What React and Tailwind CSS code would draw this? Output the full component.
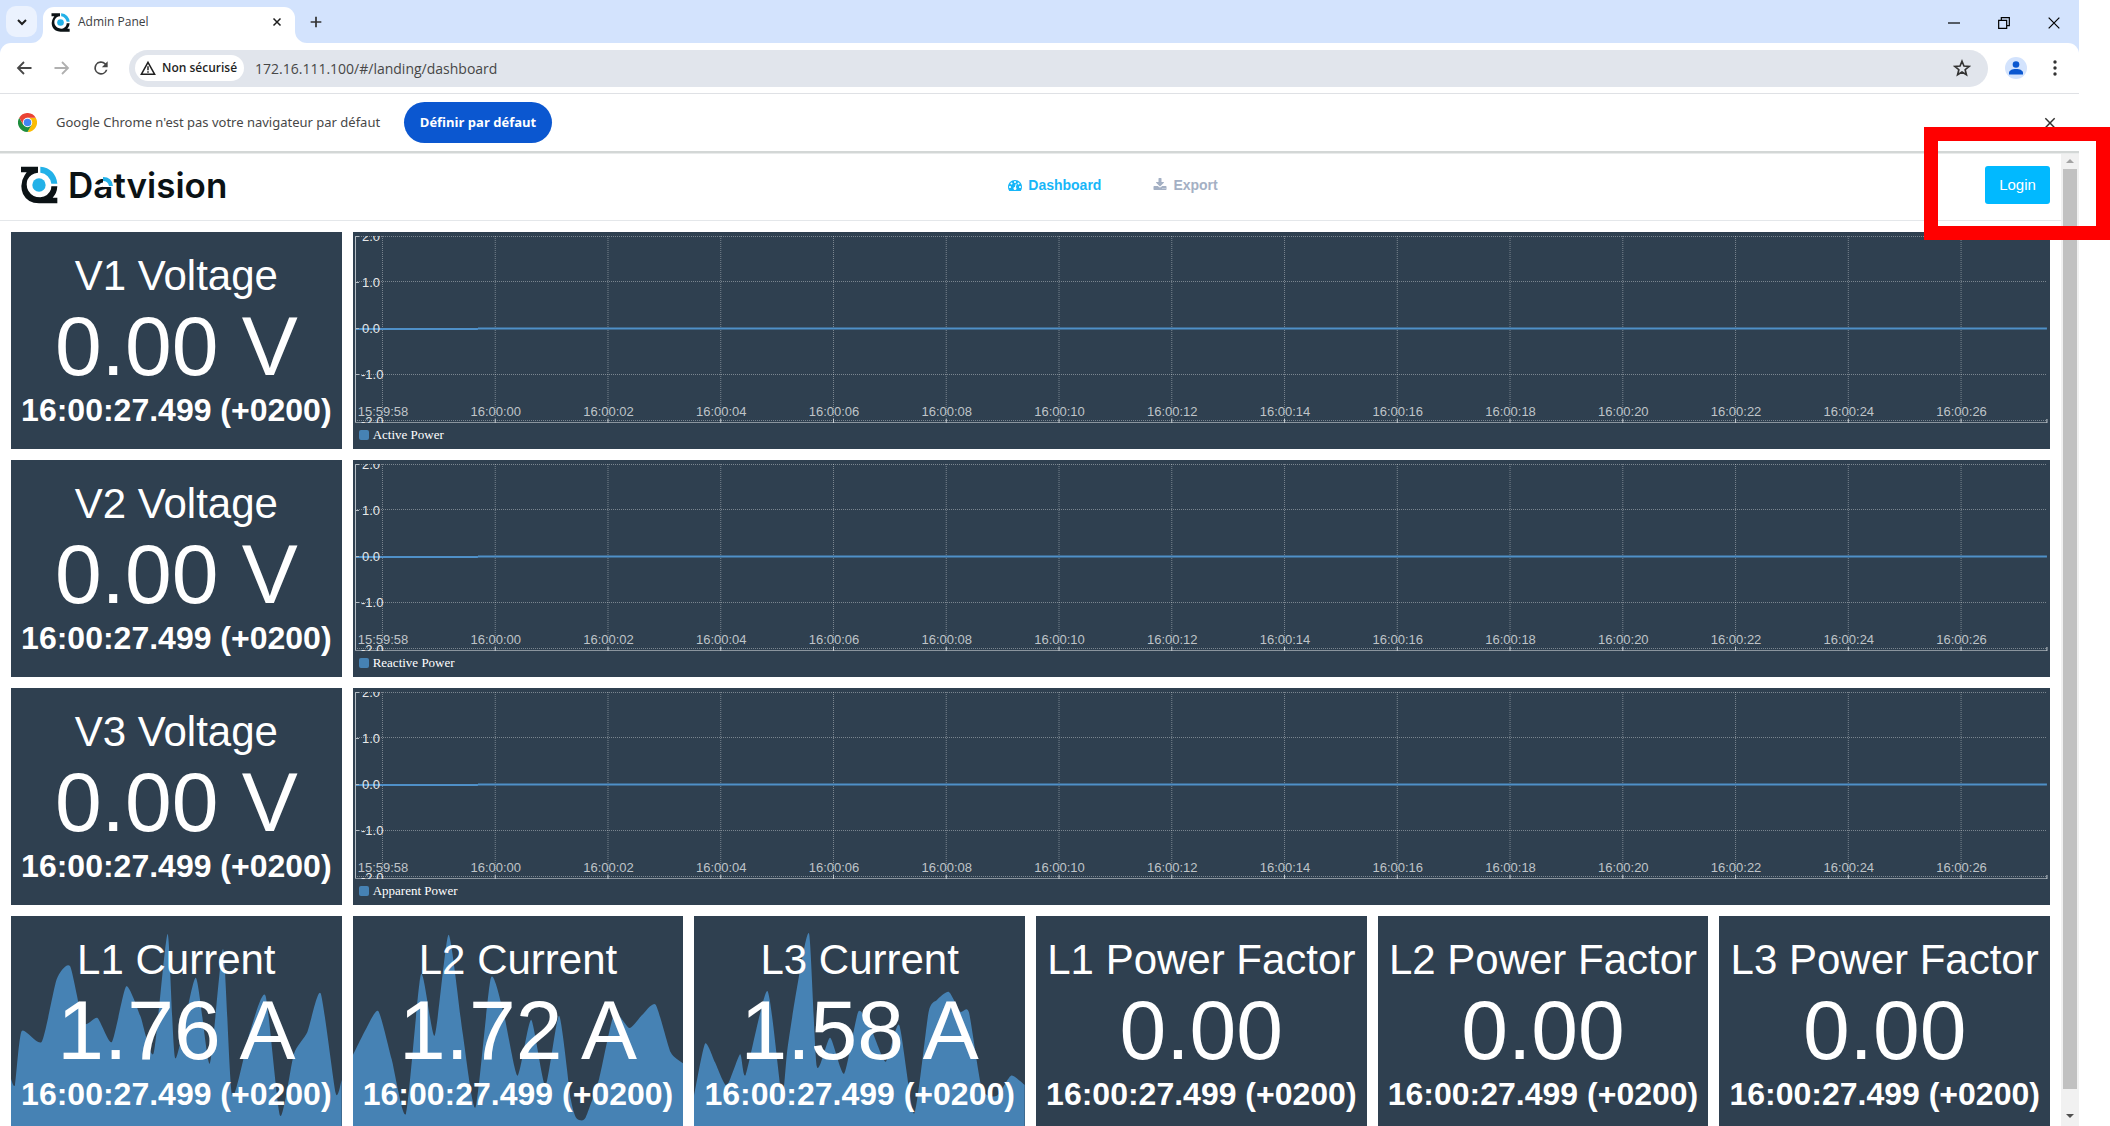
import React from "react";

const TIMESTAMP = "16:00:27.499 (+0200)";

const L1 = {
  box: "33 51 990 651",
  points: [[33, 540], [45, 557], [65, 396], [125, 428], [170, 240], [210, 202], [250, 372], [292, 357], [335, 429], [378, 262], [420, 350], [460, 463], [502, 105], [525, 478], [586, 236], [628, 494], [668, 150], [695, 590], [748, 400], [795, 290], [839, 650], [880, 465], [920, 400], [960, 283], [1005, 582], [1023, 543]],
};
const L2 = {
  box: "36 51 993 651",
  points: [[36, 468], [75, 390], [112, 336], [152, 480], [195, 644], [240, 226], [281, 410], [323, 107], [365, 400], [404, 625], [450, 237], [490, 350], [530, 530], [571, 362], [614, 560], [655, 350], [690, 600], [705, 655], [718, 664], [735, 655], [775, 540], [820, 345], [866, 387], [905, 347], [945, 317], [990, 460], [1029, 494]],
};
const L3 = {
  box: "42 51 991 651",
  points: [[42, 590], [75, 434], [105, 490], [140, 560], [180, 466], [197, 527], [262, 276], [305, 590], [322, 450], [350, 270], [387, 104], [410, 502], [450, 416], [492, 524], [535, 337], [575, 395], [617, 488], [657, 378], [702, 644], [745, 340], [770, 303], [806, 279], [840, 338], [866, 340], [905, 570], [950, 590], [992, 530], [1033, 558]],
};

const METERS = [
  { title: "L1 Current", value: "1.76 A", area: L1 },
  { title: "L2 Current", value: "1.72 A", area: L2 },
  { title: "L3 Current", value: "1.58 A", area: L3 },
  { title: "L1 Power Factor", value: "0.00" },
  { title: "L2 Power Factor", value: "0.00" },
  { title: "L3 Power Factor", value: "0.00" },
];

const ROWS = [
  { title: "V1 Voltage", legend: "Active Power" },
  { title: "V2 Voltage", legend: "Reactive Power" },
  { title: "V3 Voltage", legend: "Apparent Power" },
];

const TIMES = ["15:59:58", "16:00:00", "16:00:02", "16:00:04", "16:00:06", "16:00:08", "16:00:10", "16:00:12", "16:00:14", "16:00:16", "16:00:18", "16:00:20", "16:00:22", "16:00:24", "16:00:26"];

function areaPath(points) {
  const t = 0.1;
  const at = (i) => points[Math.max(0, Math.min(points.length - 1, i))];
  let d = `M${points[0][0]} 702L${points[0][0]} ${points[0][1]}`;
  for (let i = 0; i < points.length - 1; i++) {
    const [p0, p1, p2, p3] = [at(i - 1), at(i), at(i + 1), at(i + 2)];
    d += `C${p1[0] + (p2[0] - p0[0]) * t} ${p1[1] + (p2[1] - p0[1]) * t} ${p2[0] - (p3[0] - p1[0]) * t} ${p2[1] - (p3[1] - p1[1]) * t} ${p2[0]} ${p2[1]}`;
  }
  return `${d}L${points[points.length - 1][0]} 702Z`;
}

function Mark({ className }) {
  return (
    <svg viewBox="0 0 112 114" className={className} aria-hidden="true">
      <path d="M2 2H53V20Q30 22 21 42Q16 60 24 74Q36 94 60 94Q84 92 92 70L93 61H111Q110 82 97 95H111V112H56Q22 112 8 84Q-4 54 13 28L19 19H2Z" fill="#0b1215" />
      <path d="M60 2Q82 3 96 18Q109 32 111 53H93Q91 40 82 31Q73 21 60 20Z" fill="#22b1e8" />
      <circle cx="56" cy="57" r="20" fill="#22b1e8" />
    </svg>
  );
}

function ChromeLogo() {
  return (
    <svg viewBox="0 0 48 48" className="size-[19px] shrink-0" aria-hidden="true">
      <path d="M24 12H44.8A24 24 0 0 1 24 48L34.4 30Z" fill="#fbbc04" />
      <path d="M3.2 12L13.6 30L34.4 30L24 48A24 24 0 0 1 3.2 12Z" fill="#1e8e3e" />
      <path d="M3.2 12A24 24 0 0 1 44.8 12H24L13.6 30Z" fill="#ea4335" />
      <circle cx="24" cy="24" r="12" fill="#fff" />
      <circle cx="24" cy="24" r="9.5" fill="#4285f4" />
    </svg>
  );
}

function Icon({ d, className, width = 2 }) {
  return (
    <svg viewBox="0 0 24 24" className={className} fill="none" stroke="currentColor" strokeWidth={width} aria-hidden="true">
      <path d={d} />
    </svg>
  );
}

function TabStrip() {
  return (
    <div className="flex h-[43px] items-end bg-[#d3e3fd] pl-[6px]">
      <button aria-label="Rechercher dans les onglets" className="mb-[6px] flex size-[31px] items-center justify-center rounded-[10px] bg-[#ebf2fe] text-[#1f1f1f]">
        <Icon d="M6 9l6 6 6-6" className="size-4" width={3} />
      </button>
      <div className="relative ml-[6px] flex h-9 w-[252px] items-center rounded-t-[11px] bg-white pr-[10px] pb-[6px] pl-2">
        <svg viewBox="0 0 12 12" className="absolute bottom-0 -left-3 size-3" aria-hidden="true"><path d="M12 0A12 12 0 0 1 0 12H12Z" fill="#fff" /></svg>
        <svg viewBox="0 0 12 12" className="absolute -right-3 bottom-0 size-3" aria-hidden="true"><path d="M0 0A12 12 0 0 0 12 12H0Z" fill="#fff" /></svg>
        <Mark className="size-[19px]" />
        <span className="ml-2 flex-1 text-[12px] leading-5 text-[#3c4043]">Admin Panel</span>
        <button aria-label="Fermer l'onglet" className="flex size-4 items-center justify-center text-[#1f1f1f]">
          <Icon d="M5 5l14 14M19 5L5 19" className="size-3" width={3} />
        </button>
      </div>
      <button aria-label="Nouvel onglet" className="mb-[13px] ml-[13px] text-[#333]">
        <Icon d="M12 4v16M4 12h16" className="size-4" width={2.6} />
      </button>
      <div className="mb-[12px] ml-auto flex items-center gap-[34px] pr-[17px] text-black">
        <button aria-label="Réduire"><Icon d="M3 12h18" className="size-4" width={1.8} /></button>
        <button aria-label="Restaurer"><Icon d="M4 8h12v12H4zM8 8V4h12v12h-4" className="size-4" width={1.8} /></button>
        <button aria-label="Fermer"><Icon d="M4 4l16 16M20 4L4 20" className="size-4" width={1.8} /></button>
      </div>
    </div>
  );
}

function Toolbar() {
  return (
    <div className="bg-[#d3e3fd]">
      <div className="flex h-[51px] items-center rounded-t-[11px] border-b border-[#dfe1e5] bg-white pr-[16px] pl-[15px] text-[#474747]">
        <button aria-label="Précédent"><Icon d="M22 12H4M12 4l-8 8 8 8" className="size-[18px]" width={2.4} /></button>
        <button aria-label="Suivant" className="ml-5 text-[#b0b0b0]"><Icon d="M2 12h18M12 4l8 8-8 8" className="size-[18px]" width={2.4} /></button>
        <button aria-label="Actualiser" className="ml-5">
          <svg viewBox="0 0 24 24" className="size-5" aria-hidden="true">
            <path d="M17.65 6.35A8 8 0 1 0 19.73 14h-2.08A6 6 0 1 1 12 6c1.66 0 3.14.69 4.22 1.78L13 11h7V4z" fill="currentColor" />
          </svg>
        </button>
        <div className="ml-[18px] flex h-[37px] flex-1 items-center rounded-full bg-[#e1e5ec] pr-[17px] pl-[6px]">
          <button className="flex h-[26px] w-[109px] shrink-0 items-center gap-[6px] rounded-full bg-white pl-[5px] text-[12px] font-semibold text-[#1f1f1f]">
            <svg viewBox="0 0 24 24" className="size-4 shrink-0" fill="none" stroke="currentColor" strokeWidth="2.2" aria-hidden="true">
              <path d="M12 3.5L22 21.5H2zM12 9.5v6M12 17v2.2" />
            </svg>
            <span className="whitespace-nowrap">Non sécurisé</span>
          </button>
          <input aria-label="Adresse" readOnly value="172.16.111.100/#/landing/dashboard" className="ml-[11px] min-w-0 flex-1 bg-transparent text-[14px] text-[#474747] outline-none" />
          <button aria-label="Ajouter aux favoris" className="text-[#333]">
            <Icon d="M12 3l2.6 6.4 6.9.5-5.3 4.4 1.7 6.7L12 17.3 6.1 21l1.7-6.7L2.5 9.9l6.9-.5z" className="size-[18px]" width={2.2} />
          </button>
        </div>
        <button aria-label="Profil" className="ml-[17px] flex size-[22px] items-center justify-center rounded-full bg-[#d3e3fd]">
          <svg viewBox="0 0 16 16" className="size-4" fill="#0b57d0" aria-hidden="true">
            <circle cx="8" cy="4.5" r="3.3" />
            <path d="M1 14.5v-1.5c0-2.5 3-4 7-4s7 1.500 7 4v1.500z" />
          </svg>
        </button>
        <button aria-label="Menu" className="ml-5">
          <svg viewBox="0 0 16 16" className="size-4" fill="#333" aria-hidden="true">
            <circle cx="8" cy="2" r="1.7" /><circle cx="8" cy="8" r="1.7" /><circle cx="8" cy="14" r="1.7" />
          </svg>
        </button>
      </div>
    </div>
  );
}

function InfoBar() {
  return (
    <div className="flex h-[57px] shrink-0 items-center bg-white pr-[21px] pl-[18px]">
      <ChromeLogo />
      <span className="ml-[19px] w-[330px] font-['Noto_Sans',sans-serif] text-[13px] whitespace-nowrap text-[#474747]">Google Chrome n'est pas votre navigateur par défaut</span>
      <button className="ml-[18px] h-[41px] w-[148px] rounded-full bg-[#0b57d0] text-[13px] font-bold whitespace-nowrap text-white">Définir par défaut</button>
      <button aria-label="Fermer" className="ml-auto text-[#333]">
        <Icon d="M5 5l14 14M19 5L5 19" className="size-4" width={2.2} />
      </button>
    </div>
  );
}

function Header() {
  return (
    <header className="flex h-[67px] items-start justify-between border-b border-[#e4e7ea] pt-[12px] pr-[11px] pl-5">
      <a href="#/landing" className="flex h-[38px] w-[221px] items-center">
        <Mark className="size-[38px] shrink-0" />
        <span className="ml-[10px] font-['Inter'] text-[35px] leading-9 font-semibold text-[#0b1215]">
          D<span className="relative">a<svg viewBox="0 0 10 10" className="absolute top-[13px] right-0 size-[10px]" aria-hidden="true"><path d="M0 0H10V10H0Z" fill="#fff" /><path d="M0 0Q9 0 10 9H6Q5 4 0 4Z" fill="#22b1e8" /></svg></span>tvision
        </span>
      </a>
      <nav className="flex h-[38px] items-center gap-[52px] text-[14px] font-bold">
        <a href="#/landing/dashboard" className="flex items-center gap-[6px] text-[#17b6f8]">
          <svg viewBox="0 0 1792 1792" className="size-[14px]" fill="currentColor" aria-hidden="true">
            <path d="M384 1152q0-53-37.5-90.5t-90.5-37.5-90.5 37.5-37.5 90.5 37.5 90.5 90.5 37.5 90.5-37.5 37.5-90.5zm192-448q0-53-37.5-90.5t-90.5-37.5-90.5 37.5-37.5 90.5 37.5 90.5 90.5 37.5 90.5-37.5 37.5-90.5zm428 481l101-382q6-26-7.5-48.5t-38.5-29.5-48 6.5-30 39.5l-101 382q-60 5-107 43.5t-63 98.5q-20 77 20 146t117 89 146-20 89-117q16-60-6-117t-72-91zm660-33q0-53-37.5-90.5t-90.5-37.5-90.5 37.5-37.5 90.5 37.5 90.5 90.5 37.5 90.5-37.5 37.5-90.5zm-640-640q0-53-37.5-90.5t-90.5-37.5-90.5 37.5-37.5 90.5 37.5 90.5 90.5 37.5 90.5-37.5 37.5-90.5zm448 192q0-53-37.5-90.5t-90.5-37.5-90.5 37.5-37.5 90.5 37.5 90.5 90.5 37.5 90.5-37.5 37.5-90.5zm320 448q0 261-141 483-19 29-54 29h-1402q-35 0-54-29-141-221-141-483 0-182 71-348t191-286 286-191 348-71 348 71 286 191 191 286 71 348z" />
          </svg>
          Dashboard
        </a>
        <a href="#/landing/export" className="flex items-center gap-[6px] text-[#a4b0c4]">
          <svg viewBox="0 0 1664 1792" className="size-[14px]" fill="currentColor" aria-hidden="true">
            <path d="M1280 1344q0-26-19-45t-45-19-45 19-19 45 19 45 45 19 45-19 19-45zm256 0q0-26-19-45t-45-19-45 19-19 45 19 45 45 19 45-19 19-45zm128-224v320q0 40-28 68t-68 28h-1472q-40 0-68-28t-28-68v-320q0-40 28-68t68-28h465l135 136q58 56 136 56t136-56l136-136h464q40 0 68 28t28 68zm-325-569q17 41-14 70l-448 448q-18 19-45 19t-45-19l-448-448q-31-29-14-70 17-39 59-39h256v-448q0-26 19-45t45-19h256q26 0 45 19t19 45v448h256q42 0 59 39z" />
          </svg>
          Export
        </a>
      </nav>
      <button className="h-[38px] w-[65px] rounded-[3px] bg-[#01b9ff] text-[15px] text-white">Login</button>
    </header>
  );
}

function MeterCard({ title, value, area }) {
  return (
    <section className="relative h-[217px] overflow-hidden bg-[#2f4050] pt-5 text-center whitespace-nowrap text-white">
      {area && (
        <svg viewBox={area.box} preserveAspectRatio="none" className="absolute inset-0 size-full" aria-hidden="true">
          <path d={areaPath(area.points)} fill="#4682b4" />
        </svg>
      )}
      <h2 className="relative text-[42px] leading-[48px]">{title}</h2>
      <p className="relative text-[84px] leading-[92px]">{value}</p>
      <p className="relative text-[32px] leading-9 font-bold">{TIMESTAMP}</p>
    </section>
  );
}

const pct = (x) => `${(x / 1698) * 100}%`;

function ChartCard({ legend }) {
  return (
    <section className="col-span-5 h-[217px] bg-[#2f4050]">
      <svg className="block h-[193px] w-full text-[13px]" role="img" aria-label={legend}>
        <svg y="4" width="100%" height="187" overflow="hidden">
          <g stroke="#ffffff" strokeOpacity="0.36" strokeDasharray="1 1">
            {[1, 46, 93, 139, 185].map((y) => (
              <line key={y} x1="2" x2="99.8%" y1={y - 0.5} y2={y - 0.5} />
            ))}
            {TIMES.map((t, i) => (
              <line key={t} x1={pct(29.5 + i * 112.8)} x2={pct(29.5 + i * 112.8)} y1="0" y2="187" />
            ))}
          </g>
          <line x1="2" x2={pct(125)} y1="93" y2="93" stroke="#4f90c8" strokeWidth="2" />
          <line x1={pct(125)} x2="99.8%" y1="92.5" y2="92.5" stroke="#4f90c8" strokeWidth="2" />
          <path d="M6 .5H2.5V186.5H6M2 46.5H6M2 92.5H6M2 138.5H6" fill="none" stroke="#b4bcc3" />
          <line x1="2" x2="99.8%" y1="186.5" y2="186.5" stroke="#8b959e" />
          <g stroke="#c5cbd0">
            {TIMES.slice(1).map((t, i) => (
              <line key={t} x1={pct(142.3 + i * 112.8)} x2={pct(142.3 + i * 112.8)} y1="183" y2="187" />
            ))}
            <line x1="99.8%" x2="99.8%" y1="183" y2="187" />
          </g>
          <g fill="#e6e8ea">
            <text x="9" y="5">2.0</text>
            <text x="9" y="51">1.0</text>
            <text x="9" y="97">0.0</text>
            <text x="8" y="143">-1.0</text>
            <text x="8" y="190">-2.0</text>
          </g>
          <g fill="#bfc4c8" textAnchor="middle">
            {TIMES.map((t, i) => (
              <text key={t} x={pct(30 + i * 112.8)} y="180">{t}</text>
            ))}
          </g>
        </svg>
      </svg>
      <div className="flex h-5 items-center gap-1 pl-[6px] font-['Liberation_Serif',serif] text-[13px] text-white">
        <span className="size-[10px] rounded-[2px] bg-[#4682b4]" />
        {legend}
      </div>
    </section>
  );
}

function ScrollBar() {
  return (
    <div className="flex w-[18px] shrink-0 flex-col items-center bg-[#f1f1f1] pt-[5px] pb-[8px]" aria-hidden="true">
      <svg viewBox="0 0 8 4" className="h-1 w-2"><path d="M0 4L4 0L8 4Z" fill="#a3a3a3" /></svg>
      <div className="mt-[6px] mb-[25px] w-[14px] flex-1 bg-[#c1c1c1]" />
      <svg viewBox="0 0 8 4" className="h-1 w-2"><path d="M0 0L4 4L8 0Z" fill="#505050" /></svg>
    </div>
  );
}

export default function App() {
  return (
    <div className="relative flex h-screen flex-col overflow-hidden bg-white pr-[31px] font-['Liberation_Sans',Arial,sans-serif]">
      <div className="shrink-0 font-['Open_Sans',sans-serif]">
        <TabStrip />
        <Toolbar />
        <InfoBar />
        <div className="h-[3px] border-b border-[#e9ebeb] bg-[#d3d7d6]" />
      </div>
      <div className="flex min-h-0 flex-1">
        <div className="min-w-0 flex-1 overflow-hidden">
          <Header />
          <main className="grid grid-cols-6 gap-[11px] p-[11px]">
            {ROWS.map((row) => (
              <React.Fragment key={row.title}>
                <MeterCard title={row.title} value="0.00 V" />
                <ChartCard legend={row.legend} />
              </React.Fragment>
            ))}
            {METERS.map((m) => (
              <MeterCard key={m.title} {...m} />
            ))}
          </main>
        </div>
        <ScrollBar />
      </div>
      <div className="pointer-events-none absolute top-[127px] right-0 h-[113px] w-[186px] border-[14px] border-[#ff0000]" />
    </div>
  );
}
